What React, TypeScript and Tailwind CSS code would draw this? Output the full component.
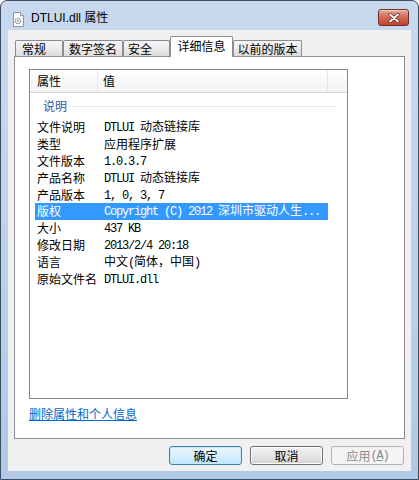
import React from "react";

const rows: [string, string][] = [
  ["文件说明", "DTLUI 动态链接库"],
  ["类型", "应用程序扩展"],
  ["文件版本", "1.0.3.7"],
  ["产品名称", "DTLUI 动态链接库"],
  ["产品版本", "1, 0, 3, 7"],
  ["版权", "Copyright (C) 2012 深圳市驱动人生..."],
  ["大小", "437 KB"],
  ["修改日期", "2013/2/4 20:18"],
  ["语言", "中文(简体，中国)"],
  ["原始文件名", "DTLUI.dll"],
];

const tabs = [
  { label: "常规", w: "w-[48px] pl-[6px]" },
  { label: "数字签名", w: "w-[60px] pl-[5px]" },
  { label: "安全", w: "w-[47px] pl-[4px]" },
  { label: "详细信息", w: "w-[63px] justify-center", active: true },
  { label: "以前的版本", w: "w-[69px] justify-center" },
];

// latin runs in a fixed-width face, CJK in the sans one
const Mixed = ({ text }: { text: string }) => (
  <>
    {text
      .split(/([\x20-\x7e]+)/)
      .filter(Boolean)
      .map((part, i) =>
        /^[\x20-\x7e]+$/.test(part) ? (
          <span
            key={i}
            className="whitespace-pre font-['Liberation_Mono',monospace] text-[12px] tracking-[-1.2px]"
          >
            {part}
          </span>
        ) : (
          <span key={i}>{part}</span>
        )
      )}
  </>
);

const FileIcon = () => (
  <svg width="13" height="15" viewBox="0 0 13 15">
    <path d="M1.5 0.5h7l3 3v11h-10z" fill="#fdfdfd" stroke="#8a96a6" />
    <path d="M8.5 0.5v3h3" fill="#e4e8ee" stroke="#8a96a6" />
    <circle cx="6" cy="9" r="2.6" fill="none" stroke="#7d8794" strokeWidth="1.4" strokeDasharray="1.3 0.9" />
    <circle cx="6" cy="9" r="1" fill="#9aa4b0" />
  </svg>
);

const App = () => {
  return (
    <div className="h-[480px] w-[419px] bg-white font-['Noto_Sans_CJK_SC','Liberation_Sans',sans-serif] text-[12px] text-black">
      <div className="flex h-[480px] w-[419px] flex-col rounded-t-[7px] border border-[#3d4c5e] bg-gradient-to-b from-[#c8d9ee] via-[#bdd2ec] to-[#b0c9e6]">
        {/* title bar */}
        <div className="flex h-[29px] shrink-0 items-start">
          <div className="ml-[11px] mt-[11px]">
            <FileIcon />
          </div>
          <span className="ml-[6px] mt-[9px] font-['Liberation_Sans','Noto_Sans_CJK_SC',sans-serif] text-[12px] leading-[16px] text-black">
            DTLUI.dll 属性
          </span>
          <button className="ml-auto mr-[9px] mt-[8px] flex h-[17px] w-[31px] items-center justify-center rounded-[3px] border border-[#6b2d25] bg-gradient-to-b from-[#e6a796] via-[#cf6a55] to-[#c2412c] shadow-[inset_0_1px_0_#f3cfc5]">
            <svg width="12" height="10" viewBox="0 0 12 10">
              <path d="M2 1.5l8 7M10 1.5l-8 7" stroke="#5a2019" strokeWidth="3.2" strokeLinecap="round" />
              <path d="M2 1.5l8 7M10 1.5l-8 7" stroke="#ffffff" strokeWidth="1.8" strokeLinecap="round" />
            </svg>
          </button>
        </div>

        {/* client area */}
        <div className="mx-[7px] mb-[8px] flex flex-1 flex-col bg-[#f0f0f0] pt-[6px]">
          {/* tabs */}
          <div className="ml-[7px] flex h-[20px] items-end">
            {tabs.map((t) =>
              t.active ? (
                <div
                  key={t.label}
                  className={`relative z-10 -mb-px flex h-[21px] items-center rounded-t-[2px] border border-b-0 border-[#898c95] bg-white pb-[2px] ${t.w}`}
                >
                  <span className="leading-none">{t.label}</span>
                </div>
              ) : (
                <div
                  key={t.label}
                  className={`flex h-[16px] items-center rounded-t-[2px] border border-b-0 border-[#898c95] bg-gradient-to-b from-[#f6f6f6] via-[#ebebeb] to-[#dcdcdc] ${t.w}`}
                >
                  <span className="leading-none">{t.label}</span>
                </div>
              )
            )}
          </div>

          {/* tab panel */}
          <div className="mx-[6px] flex h-[383px] flex-col border border-[#898c95] bg-white">
            <div className="ml-[14px] mt-[12px] flex h-[330px] w-[319px] flex-col border border-[#828790] bg-white">
              <div className="flex h-[23px] shrink-0 items-center border-b border-[#d5d5d5] bg-gradient-to-b from-white to-[#f2f3f5]">
                <div className="flex h-full w-[68px] items-center border-r border-[#e3e5e8] pl-[7px]">
                  <span className="leading-none">属性</span>
                </div>
                <div className="flex h-full w-[230px] items-center border-r border-[#e3e5e8] pl-[5px]">
                  <span className="leading-none">值</span>
                </div>
              </div>

              <div className="flex h-[26px] shrink-0 items-center pl-[13px] pr-[11px]">
                <span className="leading-none text-[#2c57b0]">说明</span>
                <div className="ml-[6px] h-px flex-1 bg-[#e3e6eb]" />
              </div>

              {rows.map(([label, value]) => {
                const selected = label === "版权";
                return (
                  <div
                    key={label}
                    className={`ml-[5px] flex h-[16.8px] w-[293px] shrink-0 items-center whitespace-nowrap ${
                      selected ? "bg-[#3399ff] text-white" : ""
                    }`}
                  >
                    <span className="w-[69px] pl-[2px] leading-none">{label}</span>
                    <span className="leading-none">
                      <Mixed text={value} />
                    </span>
                  </div>
                );
              })}
            </div>

            <a className="ml-[14px] mt-[8px] self-start leading-[14px] text-[#0066cc] underline">
              删除属性和个人信息
            </a>
          </div>

          {/* buttons */}
          <div className="mr-[7px] mt-[7px] flex justify-end gap-[8px]">
            <button className="flex h-[19px] w-[73px] items-center justify-center rounded-[3px] border border-[#3c7fb1] bg-gradient-to-b from-[#eaf6fd] via-[#d9f0fc] to-[#bde5fb] shadow-[inset_0_0_0_1px_#c5e9fc] leading-none">
              确定
            </button>
            <button className="flex h-[19px] w-[73px] items-center justify-center rounded-[3px] border border-[#707070] bg-gradient-to-b from-[#f2f2f2] via-[#e6e6e6] to-[#d2d2d2] shadow-[inset_0_0_0_1px_#fbfbfb] leading-none">
              取消
            </button>
            <button className="flex h-[19px] w-[73px] items-center justify-center rounded-[3px] border border-[#adb2b5] bg-[#f4f4f4] leading-none text-[#8a8a8a]">
              应用
              <span className="font-['Liberation_Mono',monospace] text-[12px] tracking-[-1.2px]">
                (<span className="underline">A</span>)
              </span>
            </button>
          </div>
        </div>
      </div>
    </div>
  );
};

export default App;
